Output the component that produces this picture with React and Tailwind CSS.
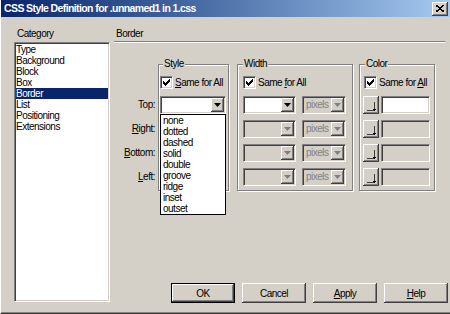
const font = "font-['Liberation_Sans',Arial,sans-serif]";

const SUNKEN =
  'border border-t-[#808080] border-l-[#808080] border-b-white border-r-white shadow-[inset_1px_1px_0_#404040,inset_-1px_-1px_0_#d4d0c8]';
const RAISED =
  'bg-[#d4d0c8] shadow-[inset_-1px_-1px_0_#404040,inset_1px_1px_0_#fff,inset_-2px_-2px_0_#808080]';

const styles = ['none', 'dotted', 'dashed', 'solid', 'double', 'groove', 'ridge', 'inset', 'outset'];
const categories = ['Type', 'Background', 'Block', 'Box', 'Border', 'List', 'Positioning', 'Extensions'];

function Check() {
  return (
    <span className={`flex h-[13px] w-[13px] shrink-0 items-center justify-center bg-white ${SUNKEN}`}>
      <svg width="7" height="7" viewBox="0 0 7 7" shapeRendering="crispEdges">
        <path d="M0 2h1v1h1v1h1V3h1V2h1V1h1V0h1v3H6v1H5v1H4v1H3v1H2V6H1V5H0z" fill="#000" />
      </svg>
    </span>
  );
}

function Arrow({ disabled }) {
  return (
    <span className={`flex h-full w-[13px] items-center justify-center ${RAISED}`}>
      <svg width="7" height="4" viewBox="0 0 7 4">
        <path d="M0 0h7L3.5 4z" fill={disabled ? '#808080' : '#000'} />
      </svg>
    </span>
  );
}

function Combo({ className = '', disabled, text, children }) {
  return (
    <div className={`relative flex h-[18px] p-[1px] ${disabled ? 'bg-[#d4d0c8]' : 'bg-white'} ${SUNKEN} ${className}`}>
      <span className="flex-1 truncate pl-[2px] leading-[14px] text-[#808080]">{text}</span>
      <Arrow disabled={disabled} />
      {children}
    </div>
  );
}

function ColorRow({ enabled }) {
  return (
    <div className="flex h-[18px] gap-[2px]">
      <span className={`flex w-[16px] items-end justify-end p-[3px] ${RAISED}`}>
        <svg width="9" height="9" viewBox="0 0 9 9" shapeRendering="crispEdges">
          <path d="M0 8h7M7 0v8" stroke="#404040" strokeWidth="1" fill="none" />
          <path d="M6 7h3L7.5 9z" fill="#000" />
        </svg>
      </span>
      <div className={`w-[49px] ${enabled ? 'bg-white' : 'bg-[#d4d0c8]'} ${SUNKEN}`} />
    </div>
  );
}

function Group({ label, className, labelLeft, children }) {
  return (
    <div
      className={`relative border border-[#808080] pt-[11px] pb-[4px] shadow-[inset_1px_1px_0_#fff,1px_1px_0_#fff] ${className}`}
    >
      <span className={`absolute top-[-7px] bg-[#d4d0c8] px-[1px] leading-[12px] ${labelLeft}`}>{label}</span>
      {children}
    </div>
  );
}

function SameForAll({ children }) {
  return (
    <div className="flex h-[13px] items-center gap-[2px]">
      <Check />
      <span className="leading-[13px]">{children}</span>
    </div>
  );
}

function Btn({ children, def }) {
  return (
    <div className={`h-[20px] w-[64px] ${def ? 'border border-black' : ''}`}>
      <div className={`flex h-full w-full items-center justify-center ${RAISED}`}>{children}</div>
    </div>
  );
}

export default function App() {
  return (
    <div
      className={`flex h-[314px] w-[450px] flex-col overflow-hidden border-b border-l border-b-[#404040] border-l-white bg-[#d4d0c8] text-[10px] tracking-[-0.5px] text-black ${font}`}
    >
      {/* title bar */}
      <div className="flex h-[17px] shrink-0 items-center justify-between bg-linear-to-r from-[#0a246a] to-[#a6caf0] pr-[2px] pl-[3px]">
        <span className="text-[10.5px] leading-[13px] font-bold tracking-[-0.6px] text-white">
          CSS Style Definition for .unnamed1 in 1.css
        </span>
        <span className={`flex h-[14px] w-[16px] items-center justify-center ${RAISED}`}>
          <svg width="8" height="7" viewBox="0 0 8 7" shapeRendering="crispEdges">
            <path d="M0 0l8 7M8 0L0 7" stroke="#000" strokeWidth="1.6" />
          </svg>
        </span>
      </div>

      <div className="flex flex-1 border-b border-b-[#808080] pr-[2px] pl-[13px]">
        {/* category */}
        <div className="flex w-[96px] flex-col pt-[11px]">
          <span className="h-[12px] pl-[3px] leading-[12px]">Category</span>
          <div className={`mt-[2px] h-[260px] bg-white p-[1px] ${SUNKEN}`}>
            {categories.map((c) => (
              <div
                key={c}
                className={`h-[11px] leading-[11px] ${c === 'Border' ? 'bg-[#0a246a] text-white' : ''}`}
              >
                {c}
              </div>
            ))}
          </div>
        </div>

        {/* panel */}
        <div className="ml-[4px] flex flex-1 flex-col pt-[11px]">
          <span className="h-[12px] pl-[2px] leading-[12px]">Border</span>
          <div className="mt-[1px] mr-[3px] h-[2px] border-t border-b border-t-[#808080] border-b-white" />

          <div className="mt-[21px] flex">
            <div className="flex w-[44px] flex-col items-end gap-[6px] pt-[32px] pr-[3px]">
              <span className="h-[18px] leading-[18px]">Top:</span>
              <span className="h-[18px] leading-[18px]">
                <u>R</u>ight:
              </span>
              <span className="h-[18px] leading-[18px]">
                <u>B</u>ottom:
              </span>
              <span className="h-[18px] leading-[18px]">
                <u>L</u>eft:
              </span>
            </div>

            <Group label="Style" className="w-[71px] px-[1px]" labelLeft="left-[4px]">
              <SameForAll>
                <u>S</u>ame for All
              </SameForAll>
              <div className="mt-[7px] flex flex-col gap-[6px]">
                <Combo className="z-10 w-[66px]">
                  <div className="absolute top-full left-[-1px] mt-[1px] w-[66px] border border-black bg-white text-black">
                    {styles.map((s) => (
                      <div key={s} className="h-[11px] pl-[2px] leading-[11px]">
                        {s}
                      </div>
                    ))}
                  </div>
                </Combo>
                <Combo className="w-[66px]" disabled />
                <Combo className="w-[66px]" disabled />
                <Combo className="w-[66px]" disabled />
              </div>
            </Group>

            <Group label="Width" className="ml-[8px] w-[116px] pl-[5px]" labelLeft="left-[5px]">
              <SameForAll>
                Same <u>f</u>or All
              </SameForAll>
              <div className="mt-[7px] flex flex-col gap-[6px]">
                {[0, 1, 2, 3].map((i) => (
                  <div key={i} className="flex gap-[6px]">
                    <Combo className="w-[53px]" disabled={i > 0} />
                    <Combo className="w-[44px]" disabled text="pixels" />
                  </div>
                ))}
              </div>
            </Group>

            <Group label="Color" className="ml-[6px] w-[76px] pl-[3px]" labelLeft="left-[5px]">
              <div className="pl-[1px]">
                <SameForAll>
                  Same for <u>A</u>ll
                </SameForAll>
              </div>
              <div className="mt-[7px] flex flex-col gap-[6px]">
                {[0, 1, 2, 3].map((i) => (
                  <ColorRow key={i} enabled={i === 0} />
                ))}
              </div>
            </Group>
          </div>

          <div className="mt-auto mb-[9px] flex justify-end gap-[7px]">
            <Btn def>OK</Btn>
            <Btn>Cancel</Btn>
            <Btn>
              <span>
                <u>A</u>pply
              </span>
            </Btn>
            <Btn>
              <span>
                <u>H</u>elp
              </span>
            </Btn>
          </div>
        </div>
      </div>
    </div>
  );
}
